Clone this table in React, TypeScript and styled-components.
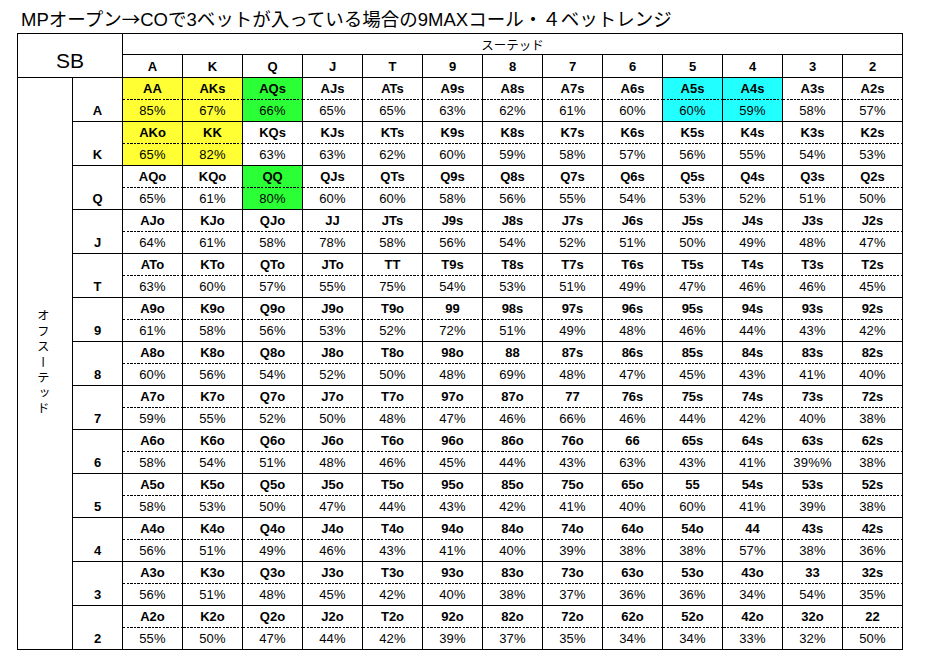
import React from "react";
import styled, { createGlobalStyle } from "styled-components";

const GlobalStyle = createGlobalStyle`
  html, body { margin: 0; padding: 0; background: #fff; }
  body {
    font-family: "Liberation Sans", "Noto Sans CJK JP", sans-serif;
    color: #000;
  }
`;

const Page = styled.div`
  padding: 0 0 0 17px;
`;

const Title = styled.h1`
  box-sizing: border-box;
  height: 33px;
  margin: 0;
  padding: 9px 0 2px 4px;
  font-size: 18.5px;
  line-height: 22px;
  font-weight: normal;
  white-space: nowrap;
`;

const Arrow = styled.span`
  font-family: "Noto Sans CJK JP", sans-serif;
  line-height: 1;
`;

const Grid = styled.div`
  display: grid;
  grid-template-columns: 55px 50px repeat(13, 60px);
  grid-template-rows: 21px 23px repeat(13, 44px);
  width: max-content;
  border-left: 1px solid #000;
  border-top: 1px solid #000;
`;

const Cell = styled.div`
  box-sizing: border-box;
  border-right: 1px solid #000;
  border-bottom: 1px solid #000;
  display: flex;
  align-items: center;
  justify-content: center;
`;

const SBCell = styled(Cell)`
  grid-column: 1 / 3;
  grid-row: 1 / 3;
  font-size: 21px;
  padding-top: 10px;
`;

const SuitedHeader = styled(Cell)`
  grid-column: 3 / 16;
  grid-row: 1;
  font-size: 12.5px;
  padding-top: 1px;
`;

const RankHeader = styled(Cell)`
  font-size: 13px;
  font-weight: bold;
  padding-top: 1px;
`;

const OffsuitLabel = styled(Cell)`
  grid-column: 1;
  grid-row: 3 / 16;
  padding-right: 5px;
`;

const VerticalText = styled.span`
  writing-mode: vertical-rl;
  text-orientation: upright;
  font-family: "Noto Sans CJK JP", sans-serif;
  font-size: 12.5px;
  letter-spacing: 3px;
  line-height: 1;
`;

const RowLabel = styled(Cell)`
  font-size: 13px;
  font-weight: bold;
  padding-top: 22px;
`;

const tones: Record<string, string> = {
  yellow: "#ffff33",
  green: "#2bff36",
  cyan: "#22ffff",
  none: "#ffffff",
};

const HandCell = styled.div<{ $tone: string }>`
  box-sizing: border-box;
  border-right: 1px solid #000;
  border-bottom: 1px solid #000;
  background: ${(p) => tones[p.$tone]};
  display: grid;
  grid-template-rows: 22px 1fr;
  font-size: 13px;
`;

const HandName = styled.div`
  display: flex;
  align-items: center;
  justify-content: center;
  font-weight: bold;
  padding-bottom: 1px;
  background-image: repeating-linear-gradient(
    to right,
    #000 0,
    #000 2.5px,
    transparent 2.5px,
    transparent 3.6px
  );
  background-size: 100% 1px;
  background-position: left bottom;
  background-repeat: no-repeat;
`;

const Pct = styled.div`
  display: flex;
  align-items: center;
  justify-content: center;
  letter-spacing: 0.2px;
`;

const ranks = ["A", "K", "Q", "J", "T", "9", "8", "7", "6", "5", "4", "3", "2"];

const pcts: string[][] = [
  ["85", "67", "66", "65", "65", "63", "62", "61", "60", "60", "59", "58", "57"],
  ["65", "82", "63", "63", "62", "60", "59", "58", "57", "56", "55", "54", "53"],
  ["65", "61", "80", "60", "60", "58", "56", "55", "54", "53", "52", "51", "50"],
  ["64", "61", "58", "78", "58", "56", "54", "52", "51", "50", "49", "48", "47"],
  ["63", "60", "57", "55", "75", "54", "53", "51", "49", "47", "46", "46", "45"],
  ["61", "58", "56", "53", "52", "72", "51", "49", "48", "46", "44", "43", "42"],
  ["60", "56", "54", "52", "50", "48", "69", "48", "47", "45", "43", "41", "40"],
  ["59", "55", "52", "50", "48", "47", "46", "66", "46", "44", "42", "40", "38"],
  ["58", "54", "51", "48", "46", "45", "44", "43", "63", "43", "41", "39%", "38"],
  ["58", "53", "50", "47", "44", "43", "42", "41", "40", "60", "41", "39", "38"],
  ["56", "51", "49", "46", "43", "41", "40", "39", "38", "38", "57", "38", "36"],
  ["56", "51", "48", "45", "42", "40", "38", "37", "36", "36", "34", "54", "35"],
  ["55", "50", "47", "44", "42", "39", "37", "35", "34", "34", "33", "32", "50"],
];

const highlight: Record<string, string> = {
  AA: "yellow",
  AKs: "yellow",
  AKo: "yellow",
  KK: "yellow",
  AQs: "green",
  QQ: "green",
  A5s: "cyan",
  A4s: "cyan",
};

function handName(r: number, c: number): string {
  if (r === c) return ranks[r] + ranks[c];
  if (c > r) return ranks[r] + ranks[c] + "s";
  return ranks[c] + ranks[r] + "o";
}

export default function App() {
  return (
    <>
      <GlobalStyle />
      <Page>
        <Title>
          MPオープン<Arrow>→</Arrow>COで3ベットが入っている場合の9MAXコール・４ベットレンジ
        </Title>
        <Grid>
          <SBCell>SB</SBCell>
          <SuitedHeader>スーテッド</SuitedHeader>
          {ranks.map((r) => (
            <RankHeader key={"h" + r}>{r}</RankHeader>
          ))}
          <OffsuitLabel>
            <VerticalText>オフスーテッド</VerticalText>
          </OffsuitLabel>
          {ranks.map((rowRank, r) => (
            <React.Fragment key={"r" + rowRank}>
              <RowLabel style={{ gridColumn: 2, gridRow: r + 3 }}>{rowRank}</RowLabel>
              {ranks.map((_, c) => {
                const name = handName(r, c);
                return (
                  <HandCell
                    key={name}
                    $tone={highlight[name] ?? "none"}
                    style={{ gridColumn: c + 3, gridRow: r + 3 }}
                  >
                    <HandName>{name}</HandName>
                    <Pct>{pcts[r][c]}%</Pct>
                  </HandCell>
                );
              })}
            </React.Fragment>
          ))}
        </Grid>
      </Page>
    </>
  );
}
